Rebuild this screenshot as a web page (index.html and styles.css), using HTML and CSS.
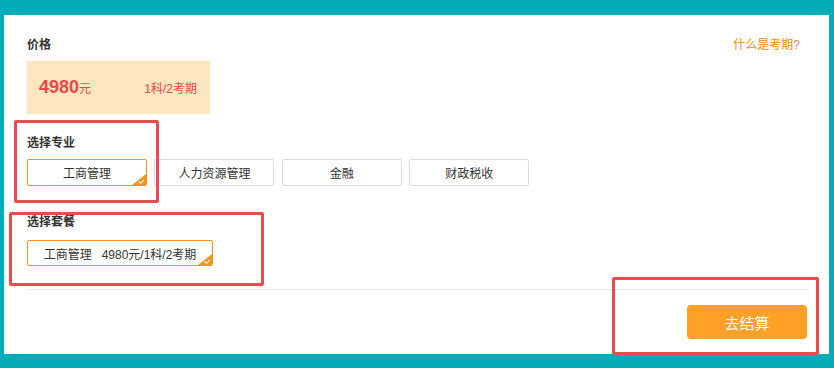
FILE: index.html
```html
<!DOCTYPE html>
<html lang="zh-CN">
<head>
<meta charset="utf-8">
<link rel="stylesheet" href="styles.css">
</head>
<body>
<div class="panel">
  <div class="head-row">
    <div class="label">价格</div>
    <a class="help">什么是考期?</a>
  </div>
  <div class="price-box">
    <div class="price"><span class="num">4980</span><span class="unit">元</span></div>
    <div class="period">1科/2考期</div>
  </div>

  <div class="label sec">选择专业</div>
  <div class="options">
    <div class="opt selected">工商管理<svg class="tick" width="14" height="11" viewBox="0 0 14 11"><path d="M14 0 L14 11 L0 11 Z" fill="#f7931e"/><path d="M6.5 7.5 L8.5 9.3 L11.8 6" stroke="#fff" stroke-width="1.1" fill="none"/></svg></div>
    <div class="opt">人力资源管理</div>
    <div class="opt">金融</div>
    <div class="opt">财政税收</div>
  </div>

  <div class="label sec2">选择套餐</div>
  <div class="options">
    <div class="opt pkg selected">工商管理&nbsp;&nbsp;&nbsp;4980元/1科/2考期<svg class="tick" width="14" height="11" viewBox="0 0 14 11"><path d="M14 0 L14 11 L0 11 Z" fill="#f7931e"/><path d="M6.5 7.5 L8.5 9.3 L11.8 6" stroke="#fff" stroke-width="1.1" fill="none"/></svg></div>
  </div>

  <div class="divider"></div>
  <div class="foot">
    <button class="checkout">去结算</button>
  </div>
</div>

<div class="mark mark1"></div>
<div class="mark mark2"></div>
<div class="mark mark3"></div>
</body>
</html>
```

FILE: styles.css
```css
html, body {
  margin: 0;
  padding: 0;
}
body {
  background: #04abb8;
  width: 834px;
  height: 368px;
  overflow: hidden;
  position: relative;
  font-family: "Liberation Sans", "Noto Sans CJK SC", sans-serif;
  color: #333;
}
.panel {
  background: #fff;
  margin: 15px 5px 0 4px;
  height: 339px;
  box-sizing: border-box;
  padding: 21px 22px 0 23px;
}
.head-row {
  display: flex;
  justify-content: space-between;
  align-items: center;
}
.label {
  font-size: 12px;
  font-weight: bold;
  line-height: 18px;
  color: #333;
}
.help {
  font-size: 12px;
  color: #ff8a00;
  line-height: 18px;
  margin-right: 7px;
}
.price-box {
  margin-top: 7px;
  width: 183px;
  height: 53px;
  background: #fee6bf;
  display: flex;
  align-items: center;
  justify-content: space-between;
  box-sizing: border-box;
  padding: 0 13px 0 12px;
  color: #f0464a;
}
.price .num {
  font-size: 18px;
  font-weight: bold;
}
.price .unit {
  font-size: 12px;
}
.period {
  font-size: 12px;
}
.sec {
  margin-top: 20px;
}
.sec2 {
  margin-top: 27px;
}
.options {
  display: flex;
  gap: 7.4px;
  margin-top: 7px;
}
.sec2 + .options {
  margin-top: 9px;
}
.opt {
  position: relative;
  width: 120px;
  height: 27px;
  box-sizing: border-box;
  border: 1px solid #dcdcdc;
  border-radius: 2px;
  font-size: 12px;
  color: #333;
  display: flex;
  align-items: center;
  justify-content: center;
  overflow: hidden;
}
.opt.selected {
  border-color: #f7931e;
}
.opt.pkg {
  width: 186px;
  height: 26px;
}
.tick {
  position: absolute;
  right: 0;
  bottom: 0;
}
.divider {
  margin-top: 23px;
  height: 1px;
  background: #e8e8e8;
}
.foot {
  display: flex;
  justify-content: flex-end;
  margin-top: 15px;
}
.checkout {
  width: 120px;
  height: 34px;
  border: none;
  border-radius: 4px;
  background: #ffa126;
  color: #fff;
  font-size: 15px;
  font-family: "Liberation Sans", "Noto Sans CJK SC", sans-serif;
  padding: 0;
}
.mark {
  position: absolute;
  border: 3px solid #e84c4c;
  border-radius: 2px;
  box-sizing: border-box;
}
.mark1 {
  left: 14px;
  top: 120px;
  width: 145px;
  height: 83px;
}
.mark2 {
  left: 9px;
  top: 212px;
  width: 255px;
  height: 74px;
}
.mark3 {
  left: 612px;
  top: 277px;
  width: 207px;
  height: 78px;
}
```
